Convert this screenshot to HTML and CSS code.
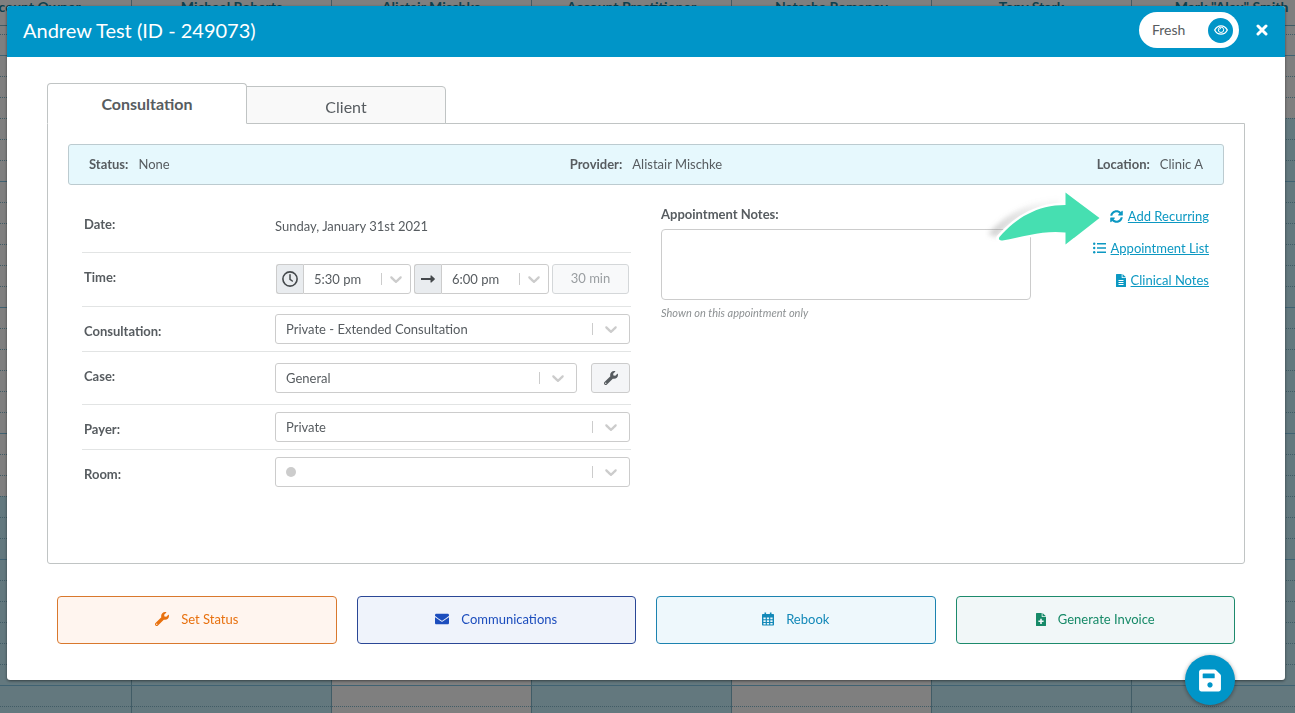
FILE: index.html
```html
<!DOCTYPE html>
<html lang="en">
<head>
    <meta charset="utf-8">
    <meta name="viewport" content="width=device-width, initial-scale=1">
    <title>Andrew Test (ID - 249073)</title>
    <link rel="stylesheet" href="styles.css">
</head>
<body>

    <!-- calendar behind the dialog -->
    <div class="calendar" id="calendar"></div>

    <svg class="sprite" aria-hidden="true">
        <symbol id="wrench" viewBox="0 0 512 512"><path d="M507.73 109.1c-2.24-9.03-13.54-12.09-20.12-5.51l-74.36 74.36-67.88-11.31-11.31-67.88 74.36-74.36c6.62-6.62 3.43-17.9-5.66-20.16-47.38-11.74-99.55.91-136.58 37.93-39.64 39.64-50.55 97.1-34.05 147.2L18.74 402.76c-24.99 24.99-24.99 65.51 0 90.5 24.99 24.99 65.51 24.99 90.5 0l213.21-213.21c50.12 16.71 107.47 5.68 147.37-34.22 37.07-37.07 49.7-89.32 37.91-136.73zM64 472c-13.25 0-24-10.75-24-24 0-13.26 10.75-24 24-24s24 10.74 24 24c0 13.25-10.75 24-24 24z"/></symbol>
        <symbol id="chevron" viewBox="0 0 20 20"><path d="M4.516 7.548c0.436-0.446 1.043-0.481 1.576 0l3.908 3.747 3.908-3.747c0.533-0.481 1.141-0.446 1.574 0 0.436 0.445 0.408 1.197 0 1.615-0.406 0.418-4.695 4.502-4.695 4.502-0.217 0.223-0.502 0.335-0.787 0.335s-0.57-0.112-0.789-0.335c0 0-4.287-4.084-4.695-4.502s-0.436-1.17 0-1.615z"/></symbol>
    </svg>

    <div class="overlay">
        <div class="dialog" role="dialog" aria-labelledby="dialogTitle">
            <header class="dialog-header">
                <h1 class="dialog-title" id="dialogTitle">Andrew Test (ID - 249073)</h1>
                <button type="button" class="view-btn">
                    Fresh
                    <span class="view-eye">
                        <svg class="line" width="14" height="10" viewBox="0 0 14 10">
                            <path d="M.7 5C2 2.4 4.3.8 7 .8S12 2.4 13.3 5C12 7.6 9.7 9.2 7 9.2S2 7.6.7 5z" stroke-width="1.3"/>
                            <circle cx="7" cy="4.8" r="2.7"/>
                            <path d="M5.6 4.7C5.6 3.9 6.2 3.3 7 3.3" stroke-width=".8"/>
                        </svg>
                    </span>
                </button>
                <button type="button" class="close-btn" aria-label="Close">
                    <svg class="line" width="12" height="12" viewBox="0 0 12 12"><path d="M2 2l8 8M10 2l-8 8" stroke-width="3" stroke-linecap="round"/></svg>
                </button>
            </header>

            <div class="dialog-body">
                <div class="tabs" role="tablist">
                    <button type="button" role="tab" aria-selected="true" class="tab tab-active">Consultation</button>
                    <button type="button" role="tab" aria-selected="false" class="tab">Client</button>
                </div>

                <div class="panel" role="tabpanel">
                    <div class="info">
                        <div><b>Status:</b>None</div>
                        <div><b>Provider:</b>Alistair Mischke</div>
                        <div class="info-end"><b>Location:</b>Clinic A</div>
                    </div>

                    <div class="details">
                        <div class="form">
                            <div class="row row-date">
                                <span class="label">Date:</span>
                                <div class="value">Sunday, January 31st 2021</div>
                            </div>
                            <div class="row row-tall">
                                <label class="label" for="timeFrom">Time:</label>
                                <div class="value times">
                                    <div class="time">
                                        <span class="addon">
                                            <svg class="line" width="16" height="16" viewBox="0 0 16 16"><circle cx="8" cy="8" r="7.1" stroke-width="1.6"/><path d="M8 3.8v4.5l2.3 1.7" stroke-width="1.5" stroke-linecap="round"/></svg>
                                        </span>
                                        <span class="pick">
                                            <select id="timeFrom"><option>5:30 pm</option></select>
                                            <span class="caret"><svg width="20" height="20"><use href="#chevron"/></svg></span>
                                        </span>
                                    </div>
                                    <div class="time">
                                        <span class="addon">
                                            <svg width="14" height="8" viewBox="0 0 14 8"><path d="M0 3.1h9.5V.9c0-.5.5-.7.9-.4l3.3 3c.3.3.3.7 0 1l-3.3 3c-.4.3-.9.1-.9-.4V4.9H0z"/></svg>
                                        </span>
                                        <span class="pick">
                                            <select aria-label="End time"><option>6:00 pm</option></select>
                                            <span class="caret"><svg width="20" height="20"><use href="#chevron"/></svg></span>
                                        </span>
                                    </div>
                                    <input class="duration" type="text" value="30 min" aria-label="Duration" disabled>
                                </div>
                            </div>
                            <div class="row">
                                <label class="label" for="consultation">Consultation:</label>
                                <div class="value">
                                    <span class="pick">
                                        <select id="consultation"><option>Private - Extended Consultation</option></select>
                                        <span class="caret"><svg width="20" height="20"><use href="#chevron"/></svg></span>
                                    </span>
                                </div>
                            </div>
                            <div class="row row-tall">
                                <label class="label" for="case">Case:</label>
                                <div class="value case">
                                    <span class="pick">
                                        <select id="case"><option>General</option></select>
                                        <span class="caret"><svg width="20" height="20"><use href="#chevron"/></svg></span>
                                    </span>
                                    <button type="button" class="tool-btn" aria-label="Manage cases"><svg width="14" height="14"><use href="#wrench"/></svg></button>
                                </div>
                            </div>
                            <div class="row">
                                <label class="label" for="payer">Payer:</label>
                                <div class="value">
                                    <span class="pick">
                                        <select id="payer"><option>Private</option></select>
                                        <span class="caret"><svg width="20" height="20"><use href="#chevron"/></svg></span>
                                    </span>
                                </div>
                            </div>
                            <div class="row">
                                <label class="label" for="room">Room:</label>
                                <div class="value">
                                    <span class="pick">
                                        <select id="room"><option></option></select>
                                        <span class="dot"></span>
                                        <span class="caret"><svg width="20" height="20"><use href="#chevron"/></svg></span>
                                    </span>
                                </div>
                            </div>
                        </div>

                        <div class="notes">
                            <label for="notes">Appointment Notes:</label>
                            <textarea id="notes"></textarea>
                            <p class="hint">Shown on this appointment only</p>
                        </div>

                        <div class="links">
                            <a href="#">
                                <svg width="13" height="13" viewBox="0 0 512 512"><path d="M370.72 133.28C339.458 104.008 298.888 87.962 255.848 88c-77.458.068-144.328 53.178-162.791 126.85-1.344 5.363-6.122 9.15-11.651 9.15H24.103c-7.498 0-13.194-6.807-11.807-14.176C33.933 94.924 134.813 8 256 8c66.448 0 126.791 26.136 171.315 68.685L463.03 40.97C478.149 25.851 504 36.559 504 57.941V192c0 13.255-10.745 24-24 24H345.941c-21.382 0-32.09-25.851-16.971-40.971l41.75-41.749zM32 296h134.059c21.382 0 32.09 25.851 16.971 40.971l-41.75 41.75c31.262 29.273 71.835 45.319 114.876 45.28 77.418-.07 144.315-53.144 162.787-126.849 1.344-5.363 6.122-9.15 11.651-9.15h57.304c7.498 0 13.194 6.807 11.807 14.176C478.067 417.076 377.187 504 256 504c-66.448 0-126.791-26.136-171.315-68.685L48.97 471.03C33.851 486.149 8 475.441 8 454.059V320c0-13.255 10.745-24 24-24z"/></svg>
                                <span>Add Recurring</span>
                            </a>
                            <a href="#">
                                <svg width="13" height="12" viewBox="0 0 13 12"><circle cx="1.2" cy="1.8" r="1.2"/><circle cx="1.2" cy="6" r="1.2"/><circle cx="1.2" cy="10.2" r="1.2"/><path d="M4 1h9v1.6H4zM4 5.2h9v1.6H4zM4 9.4h9V11H4z"/></svg>
                                <span>Appointment List</span>
                            </a>
                            <a href="#">
                                <svg width="10" height="13" viewBox="0 0 10 13"><path fill-rule="evenodd" d="M.6 0H5.700v3.500c0 .3.2.6.6.6H10v8.3c0 .3-.3.6-.6.6H.6a.6.6 0 0 1-.6-.6V.6C0 .3.3 0 .6 0zM2.500 6v.9h5V6zM2.500 8v.9h5V8zM2.500 10v.9h5V10zM6.500 0L10 3.300H6.500z"/></svg>
                                <span>Clinical Notes</span>
                            </a>

                            <!-- pointer to "Add Recurring" -->
                            <svg class="pointer" width="120" height="70" viewBox="0 0 120 70" aria-hidden="true">
                                <defs>
                                    <filter id="soft" x="-20%" y="-30%" width="140%" height="160%"><feGaussianBlur stdDeviation="2.5"/></filter>
                                    <linearGradient id="fade"><stop offset="0" stop-color="#888" stop-opacity=".4"/><stop offset=".8" stop-color="#999" stop-opacity=".1"/></linearGradient>
                                </defs>
                                <path d="M3 49C20 30 42 17 74 15L74 30C50 28 30 32 12 52z" fill="url(#fade)" filter="url(#soft)"/>
                                <path d="M14 52.5C31 33 52 20 80.5 20V47.5C60 45 40 51 17.5 55.5C14.5 56 13 54 14 52.5z" fill="#fff" stroke="#fff" stroke-width="5"/>
                                <path d="M14.5 52C31 33 52 20 80.5 20V7.5L114.5 33L80.5 59.5V47.5C60 45 40 51 17.5 55.5C14.5 56 13 54 14.5 52z" fill="#46dfb1"/>
                            </svg>
                        </div>
                    </div>
                </div>

                <div class="actions">
                    <button type="button" class="action action-status">
                        <svg width="14" height="14"><use href="#wrench"/></svg>
                        Set Status
                    </button>
                    <button type="button" class="action action-comm">
                        <svg width="14" height="14" viewBox="0 0 512 512"><path d="M502.3 190.8c3.9-3.1 9.7-.2 9.7 4.7V400c0 26.5-21.5 48-48 48H48c-26.5 0-48-21.5-48-48V195.6c0-5 5.7-7.8 9.7-4.7 22.4 17.4 52.1 39.5 154.1 113.6 21.1 15.4 56.7 47.8 92.2 47.6 35.7.3 72-32.8 92.3-47.6 102-74.1 131.6-96.3 154-113.7zM256 320c23.2.4 56.6-29.2 73.4-41.4 132.7-96.3 142.8-104.7 173.4-128.7 5.8-4.5 9.2-11.5 9.2-18.9v-19c0-26.5-21.5-48-48-48H48c-26.5 0-48 21.5-48 48v19c0 7.4 3.4 14.3 9.2 18.9 30.6 23.9 40.7 32.4 173.4 128.7 16.8 12.2 50.2 41.8 73.4 41.4z"/></svg>
                        Communications
                    </button>
                    <button type="button" class="action action-rebook">
                        <svg width="12" height="14" viewBox="0 0 12 14"><path fill-rule="evenodd" d="M2.500 .5h1.600V2h3.800V.5h1.600V2H11c.6 0 1 .4 1 1v1.200H0V3c0-.6.4-1 1-1h1.500zM0 4.200h12v8.300c0 .6-.4 1-1 1H1c-.6 0-1-.4-1-1zM1.400 5.600v1.700h2.300V5.600zM4.900 5.600v1.700h2.200V5.600zM8.300 5.600v1.700h2.300V5.600zM1.400 8.300V10h2.300V8.300zM4.900 8.300V10h2.200V8.300zM8.300 8.300V10h2.300V8.300zM1.400 11v1.400h2.300V11zM4.900 11v1.400h2.200V11zM8.300 11v1.400h2.300V11z"/></svg>
                        Rebook
                    </button>
                    <button type="button" class="action action-invoice">
                        <svg width="10" height="13" viewBox="0 0 10 13"><path fill-rule="evenodd" d="M.6 0H5.700v3.500c0 .3.2.6.6.6H10v8.300c0 .3-.3.6-.6.6H.6a.6.6 0 0 1-.6-.6V.6C0 .3.3 0 .6 0zM4.200 5.700v1.800H2.400v1.600h1.800v1.800h1.600V9.100h1.800V7.500H5.800V5.700zM6.500 0L10 3.300H6.500z"/></svg>
                        Generate Invoice
                    </button>
                </div>
            </div>

            <button type="button" class="save-btn" aria-label="Save">
                <svg width="22" height="25" viewBox="0 0 448 512"><path d="M433.941 129.941l-83.882-83.882A48 48 0 0 0 316.118 32H48C21.49 32 0 53.49 0 80v352c0 26.51 21.49 48 48 48h352c26.51 0 48-21.49 48-48V163.882a48 48 0 0 0-14.059-33.941zM224 400c-30 0-54-24-54-54s24-54 54-54 54 24 54 54-24 54-54 54zm96-276V200c0 6.627-5.373 12-12 12H86c-6.627 0-12-5.373-12-12V124c0-6.627 5.373-12 12-12h222c7 0 12 5 12 12z"/></svg>
            </button>
        </div>
    </div>

    <script>
        // busyFrom: first booked slot of the column, null when the day is free
        var columns = [
            { name: 'Account Owner', busyFrom: 21 },
            { name: 'Michael Roberts', busyFrom: 21 },
            { name: 'Alistair Mischke', busyFrom: null },
            { name: 'Account Practitioner', busyFrom: 21 },
            { name: 'Natasha Romanov', busyFrom: null },
            { name: 'Tony Stark', busyFrom: 21 },
            { name: 'Mark "Alex" Smith', busyFrom: 3 }
        ];

        var calendar = document.getElementById('calendar');

        columns.forEach(function (column) {
            var col = document.createElement('div');
            col.className = 'cal-col';

            var head = document.createElement('div');
            head.className = 'cal-head';
            head.textContent = column.name;
            col.append(head);

            var allDay = document.createElement('div');
            allDay.className = 'cal-allday';
            col.append(allDay);

            for (var i = -1; i < 36; i++) {
                var slot = document.createElement('div');
                slot.className = 'cal-slot';
                if (i % 6 == 0) slot.className += ' cal-hour';
                if (column.busyFrom !== null && i >= column.busyFrom) slot.className += ' cal-busy';
                col.append(slot);
            }
            calendar.append(col);
        });
    </script>

</body>
</html>
```

FILE: styles.css
```css
* {
    box-sizing: border-box;
}

body {
    margin: 0;
    background: #fff;
    color: #575c60;
    font-family: Lato, "Liberation Sans", sans-serif;
    font-size: 13px;
    line-height: 20px;
}

button,
input,
select,
textarea {
    font: inherit;
    color: inherit;
}

button {
    cursor: pointer;
}

svg {
    display: block;
    flex: none;
    fill: currentColor;
}

.line {
    fill: none;
    stroke: currentColor;
}

.sprite {
    display: none;
}

/* calendar */

.calendar {
    display: flex;
    height: 100vh;
    margin-left: -69px;
    overflow: hidden;
}

.cal-col {
    flex: 0 0 201px;
    margin-right: -1px;
    border-left: 1px solid #82b8cc;
    border-right: 1px solid #82b8cc;
}

.cal-head {
    height: 25px;
    font-size: 14px;
    line-height: 14px;
    font-weight: bold;
    text-align: center;
    white-space: nowrap;
    color: #1a7e9a;
}

.cal-allday {
    height: 9px;
    border-top: 1px solid #82b8cc;
}

.cal-slot {
    height: 21px;
    border-top: 1px dotted #82b8cc;
}

.cal-hour {
    border-top: 1px solid #80c4e4;
}

.cal-busy {
    background: #c6f0fc;
}

/* dialog */

.overlay {
    position: fixed;
    inset: 0;
    overflow: hidden;
    padding: 6px 10px 0 7px;
    background: rgba(0, 0, 0, .5);
}

.dialog {
    position: relative;
    background: #fff;
    border-radius: 3px;
    box-shadow: 0 1px 3px rgba(0, 0, 0, .5);
}

.dialog-header {
    display: flex;
    align-items: center;
    height: 51px;
    padding: 0 17px 3px 16px;
    background: #0095c8;
    border-radius: 3px 3px 0 0;
    color: #fff;
}

.dialog-title {
    flex: 1;
    margin: 0;
    font-size: 20px;
    font-weight: normal;
    line-height: 24px;
}

.view-btn {
    display: flex;
    align-items: center;
    justify-content: space-between;
    width: 100px;
    height: 36px;
    margin-right: 17px;
    padding: 0 6px 0 13px;
    border: 0;
    border-radius: 18px;
    background: #fff;
    color: #575c60;
    font-size: 14px;
}

.view-eye {
    display: flex;
    align-items: center;
    justify-content: center;
    width: 25px;
    height: 25px;
    border-radius: 50%;
    background: #0095c8;
    color: #fff;
}

.close-btn {
    padding: 0;
    border: 0;
    background: none;
}

.dialog-body {
    padding: 26px 40px 36px;
}

/* tabs */

.tabs {
    display: flex;
    align-items: flex-end;
}

.tab {
    width: 200px;
    height: 38px;
    margin: 0 0 -1px -1px;
    padding: 3px 0 0;
    border: 1px solid #c0c4c4;
    border-radius: 0 4px 0 0;
    background: #f9f9f9;
    font-size: 16px;
}

.tab-active {
    position: relative;
    height: 41px;
    margin-left: 0;
    padding-top: 1px;
    border-bottom-color: #fff;
    border-radius: 4px 4px 0 0;
    background: #fff;
    font-weight: bold;
}

.panel {
    min-height: 441px;
    padding: 20px;
    border: 1px solid #c0c4c4;
    border-radius: 0 0 3px 3px;
}

.info {
    display: grid;
    grid-template-columns: 1fr auto 1fr;
    padding: 9px 20px 10px;
    border: 1px solid #bccbd0;
    border-radius: 3px;
    background: #e6f8fd;
}

.info b {
    margin-right: 10px;
}

.info-end {
    text-align: right;
}

.details {
    display: grid;
    grid-template-columns: 549fr 370fr 148fr;
    gap: 30px;
    padding: 15px 15px 0 14px;
}

/* form */

.row {
    display: grid;
    grid-template-columns: 193px 1fr;
    border-bottom: 1px solid #e2e4e4;
}

.row:last-child {
    border-bottom: 0;
}

.label {
    padding: 14px 2px 0;
    font-weight: bold;
}

.value {
    padding: 7px 1px 7px 0;
}

.row-tall .value {
    padding: 11px 1px 11px 0;
}

.row-date .value {
    padding: 16px 0;
}

.pick {
    display: grid;
    flex: 1;
    height: 30px;
    border: 1px solid #ccc;
    border-radius: 3px;
    background: #fff;
}

.pick > * {
    grid-area: 1 / 1;
}

.pick select {
    width: 100%;
    padding: 0 38px 0 10px;
    border: 0;
    border-radius: 3px;
    background: none;
    appearance: none;
}

.caret {
    display: flex;
    align-items: center;
    justify-self: end;
    align-self: center;
    height: 12px;
    padding: 0 8px;
    border-left: 1px solid #ccc;
    color: #ccc;
    pointer-events: none;
}

.dot {
    align-self: center;
    width: 10px;
    height: 10px;
    margin-left: 10px;
    border-radius: 50%;
    background: #ccc;
    pointer-events: none;
}

.times {
    display: flex;
    gap: 3px;
}

.row-tall .times {
    padding: 11px 2px 12px 1px;
}

.time {
    display: flex;
    flex: 1;
}

.time .pick {
    border-radius: 0 3px 3px 0;
}

.time .caret {
    padding: 0 4px;
}

.time select {
    padding-right: 28px;
}

.addon {
    display: flex;
    align-items: center;
    justify-content: center;
    width: 27px;
    border: 1px solid #ccc;
    border-right: 0;
    border-radius: 3px 0 0 3px;
    background: #e9ecef;
    color: #45494c;
}

.duration {
    width: 77px;
    height: 30px;
    padding: 0 0 2px;
    border: 1px solid #d4d7d9;
    border-radius: 3px;
    background: #f8f9fa;
    color: #9a9ea1;
    text-align: center;
}

.case {
    display: flex;
    gap: 14px;
}

.tool-btn {
    display: flex;
    align-items: center;
    justify-content: center;
    width: 39px;
    height: 30px;
    padding: 0;
    border: 1px solid #ccc;
    border-radius: 3px;
    background: #f4f5f7;
}

/* notes and links */

.notes {
    padding-top: 4px;
}

.notes label {
    display: block;
    margin-bottom: 5px;
    font-weight: bold;
}

.notes textarea {
    display: block;
    width: 100%;
    height: 71px;
    padding: 6px 10px;
    border: 1px solid #ccc;
    border-radius: 4px;
    resize: none;
}

.hint {
    margin: 3px 0 0;
    font-size: 11px;
    font-style: italic;
    color: #8d9193;
}

.links {
    position: relative;
}

.links a {
    display: flex;
    align-items: center;
    justify-content: flex-end;
    gap: 5px;
    height: 32px;
    color: #0c98c2;
    text-decoration: none;
    white-space: nowrap;
}

.links a span {
    text-decoration: underline;
}

.pointer {
    position: absolute;
    top: -15px;
    left: -76px;
    pointer-events: none;
}

/* footer */

.actions {
    display: grid;
    grid-template-columns: repeat(4, 1fr);
    gap: 20px;
    padding: 32px 10px 0;
}

.action {
    display: flex;
    align-items: center;
    justify-content: center;
    gap: 12px;
    height: 48px;
    padding: 0 0 2px;
    border: 1px solid;
    border-radius: 4px;
}

.action-status {
    border-color: #d9782d;
    background: #fff5ef;
    color: #e8710f;
}

.action-comm {
    border-color: #2a4796;
    background: #eff3fb;
    color: #1c4dbd;
}

.action-rebook {
    border-color: #1c83b0;
    background: #eef8fc;
    color: #1389b8;
}

.action-invoice {
    border-color: #1d8a6c;
    background: #f1f7f8;
    color: #178a68;
}

.save-btn {
    position: absolute;
    right: 50px;
    bottom: -25px;
    display: flex;
    align-items: center;
    justify-content: center;
    width: 50px;
    height: 50px;
    padding: 0;
    border: 0;
    border-radius: 50%;
    background: #0095c8;
    box-shadow: 0 1px 4px rgba(0, 0, 0, .4);
    color: #fff;
}
```
